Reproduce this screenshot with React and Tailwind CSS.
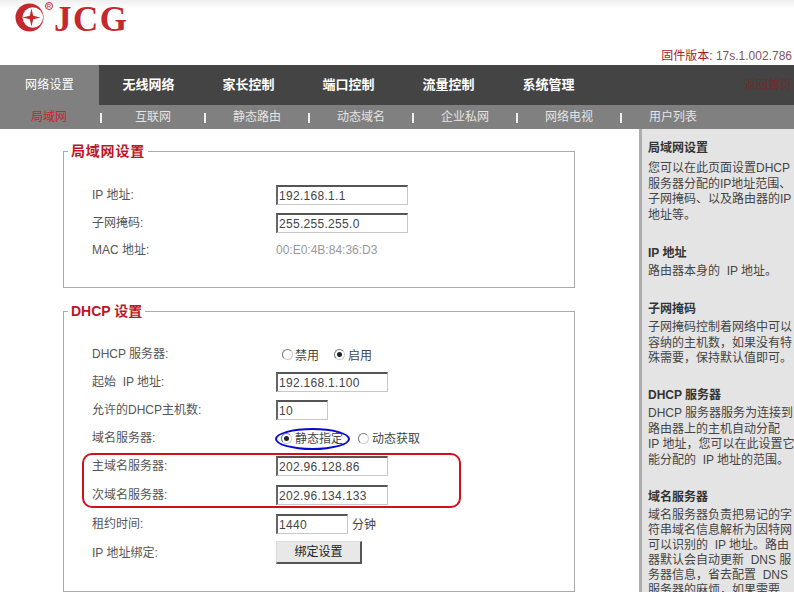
const FONT = '"Liberation Sans", "Noto Sans CJK SC", sans-serif';

const mainTabs = ['无线网络', '家长控制', '端口控制', '流量控制', '系统管理'];
const subTabs = ['互联网', '静态路由', '动态域名', '企业私网', '网络电视', '用户列表'];

const help = [
  { title: '局域网设置', cls: 'mt-0', head: 'mb-[5px]', line: 'h-[15.5px] leading-[15.5px]', lines: ['您可以在此页面设置DHCP', '服务器分配的IP地址范围、', '子网掩码、以及路由器的IP', '地址等。'] },
  { title: 'IP 地址', cls: 'mt-[22px]', head: 'mb-[3px]', line: 'h-[15.5px] leading-[15.5px]', lines: ['路由器本身的\u00a0 IP 地址。'] },
  { title: '子网掩码', cls: 'mt-[21.5px]', head: 'mb-[3px]', line: 'h-[15.5px] leading-[15.5px]', lines: ['子网掩码控制着网络中可以', '容纳的主机数，如果没有特', '殊需要，保持默认值即可。'] },
  { title: 'DHCP 服务器', cls: 'mt-[20.5px]', head: 'mb-[3px]', line: 'h-[15.5px] leading-[15.5px]', lines: ['DHCP 服务器服务为连接到', '路由器上的主机自动分配', 'IP 地址，您可以在此设置它', '能分配的\u00a0 IP 地址的范围。'] },
  { title: '域名服务器', cls: 'mt-[21px]', head: 'mb-[3px]', line: 'h-[15px] leading-[15px]', lines: ['域名服务器负责把易记的字', '符串域名信息解析为因特网', '可以识别的\u00a0 IP 地址。路由', '器默认会自动更新\u00a0 DNS 服', '务器信息，省去配置\u00a0 DNS', '服务器的麻烦，如果需要'] },
];

function Field({ value, width }) {
  return (
    <div className={`${width} h-[20px] bg-white border-t-2 border-l-2 border-r border-b border-t-[#555555] border-l-[#666666] border-r-[#c8c8c8] border-b-[#c8c8c8] pl-[1px] text-[12px] leading-[18px] tracking-[0.3px] text-[#444444]`}>
      {value}
    </div>
  );
}

function Radio({ on }) {
  return (
    <span className="w-[11px] h-[11px] rounded-full border border-t-[#777777] border-l-[#777777] border-r-[#cccccc] border-b-[#cccccc] bg-white flex items-center justify-center">
      {on && <span className="w-[5px] h-[5px] rounded-full bg-[#222222]" />}
    </span>
  );
}

function Row({ label, h, children, gray }) {
  return (
    <div className={`flex items-center ${h}`}>
      <div className="w-[184px] text-[12px] text-[#555555] whitespace-nowrap">{label}</div>
      <div className={`flex items-center ${gray ? 'text-[#999999]' : 'text-[#444444]'} text-[12px]`}>{children}</div>
    </div>
  );
}

function Logo() {
  return (
    <div className="flex items-start pl-[15px] pt-[3px]">
      <svg width="29" height="29" viewBox="0 0 29 29">
        <circle cx="14.5" cy="14.5" r="14" fill="#c5282e" />
        <circle cx="17.8" cy="14.5" r="10.2" fill="#ffffff" />
        <path fill="#c5282e" d="M16.5 5.5l1.7 7.3 7.3 1.7-7.3 1.7-1.7 7.3-1.7-7.3-7.3-1.7 7.3-1.7z" />
      </svg>
      <span className="ml-[1px] -mt-[1px] w-[8px] h-[8px] rounded-full border border-[#c5282e] text-[#c5282e] text-[6px] leading-[6px] text-center">R</span>
      <span className="ml-[1px] -mt-[1px] text-[35px] leading-[35px] font-bold tracking-[1.5px] text-[#c5282e]" style={{ fontFamily: '"Liberation Serif", serif' }}>JCG</span>
    </div>
  );
}

export default function App() {
  return (
    <div className="w-[794px] h-[592px] overflow-hidden bg-white flex flex-col" style={{ fontFamily: FONT }}>
      <header className="h-[65px] shrink-0 flex justify-between bg-[linear-gradient(to_bottom,#eeeeee,#ffffff_9px)]">
        <Logo />
        <div className="self-end pb-[1px] pr-[2px] text-[12px] leading-[16px] text-[#a31d2b] whitespace-nowrap">
          固件版本: <span className="text-[#83505a]">17s.1.002.786</span>
        </div>
      </header>

      <nav className="h-[40px] shrink-0 bg-[#444444] flex items-center">
        <div className="w-[99px] h-full bg-[#808080] flex items-center justify-center text-[12px] text-white tracking-[0.2px]">网络设置</div>
        {mainTabs.map((t) => (
          <div key={t} className="w-[100px] pr-[1px] text-center text-[13px] font-bold text-white whitespace-nowrap">{t}</div>
        ))}
        <div className="ml-auto pr-[2px] text-[12px] text-[#6e2d2d] whitespace-nowrap">返回首页</div>
      </nav>

      <nav className="h-[24px] shrink-0 bg-[#808080] flex items-center text-[12px]">
        <div className="w-[98px] text-center text-[#c8242c]">局域网</div>
        {subTabs.map((t) => (
          <div key={t} className="flex items-center">
            <div className="w-[6px] flex justify-center"><span className="w-[2px] h-[10px] mt-[2px] bg-[#eeeeee]" /></div>
            <div className="w-[98px] text-center text-[#e4e4e4] whitespace-nowrap">{t}</div>
          </div>
        ))}
      </nav>

      <div className="flex-1 flex min-h-0 relative">
        <main className="w-[639px] shrink-0 pl-[63px] pr-[64px] pt-[12px]">
          <fieldset className="h-[147px] border border-[#aaaaaa] pl-[28px] pt-[20px]">
            <legend className="-ml-[24px] px-[3px] text-[14px] leading-[20px] font-bold tracking-[0.8px] text-[#c01425]">局域网设置</legend>
            <Row label="IP 地址:" h="h-[28px]"><Field value="192.168.1.1" width="w-[132px]" /></Row>
            <Row label="子网掩码:" h="h-[28px]"><Field value="255.255.255.0" width="w-[132px]" /></Row>
            <Row label="MAC 地址:" h="h-[26px]" gray>00:E0:4B:84:36:D3</Row>
          </fieldset>

          <fieldset className="mt-[13px] h-[291px] border border-[#aaaaaa] pl-[28px] pt-[19px]">
            <legend className="-ml-[24px] px-[3px] text-[14px] leading-[20px] font-bold text-[#c01425]">DHCP 设置</legend>
            <Row label="DHCP 服务器:" h="h-[28px]">
              <span className="ml-[6px]"><Radio /></span>
              <span className="ml-[2px] mt-[3px] w-[39px]">禁用</span>
              <Radio on />
              <span className="ml-[3px] mt-[3px]">启用</span>
            </Row>
            <Row label={'起始\u00a0 IP 地址:'} h="h-[27px]"><Field value="192.168.1.100" width="w-[112px]" /></Row>
            <Row label="允许的DHCP主机数:" h="h-[29px]"><Field value="10" width="w-[52px]" /></Row>
            <Row label="域名服务器:" h="h-[28px]">
              <span className="ml-[5px]"><Radio on /></span>
              <span className="ml-[3px] mt-[2px] w-[63px] whitespace-nowrap">静态指定</span>
              <Radio />
              <span className="ml-[3px] mt-[2px] whitespace-nowrap">动态获取</span>
            </Row>
            <Row label="主域名服务器:" h="h-[28px]"><Field value="202.96.128.86" width="w-[112px]" /></Row>
            <Row label="次域名服务器:" h="h-[29px]"><Field value="202.96.134.133" width="w-[112px]" /></Row>
            <Row label="租约时间:" h="h-[29px]">
              <Field value="1440" width="w-[72px]" />
              <span className="ml-[4px] mt-[2px]">分钟</span>
            </Row>
            <Row label="IP 地址绑定:" h="h-[29px]">
              <div className="w-[86px] h-[23px] bg-[#e8e8e8] border-t border-l border-r-2 border-b-2 border-t-[#dddddd] border-l-[#dddddd] border-r-[#555555] border-b-[#555555] flex items-center justify-center text-[12px] text-[#222222]">绑定设置</div>
            </Row>
          </fieldset>
        </main>

        <aside className="flex-1 bg-[#e4e4e4] border-l-[3px] border-l-[#aeaeae] pl-[6px] pt-[11px] overflow-hidden text-[12px] text-[#444444]">
          {help.map((s, i) => (
            <section key={i} className={s.cls}>
              <h3 className={`h-[16px] leading-[16px] font-bold text-[#333333] whitespace-nowrap ${s.head}`}>{s.title}</h3>
              {s.lines.map((l) => (
                <div key={l} className={`${s.line} whitespace-nowrap`}>{l}</div>
              ))}
            </section>
          ))}
        </aside>

        <div className="absolute left-[82px] top-[324px] w-[379px] h-[55px] rounded-[10px] border-2 border-[#d0101c]" />
        <div className="absolute left-[275px] top-[299px] w-[75px] h-[22px] rounded-[50%] border-2 border-[#0a0ad0]" />
      </div>
    </div>
  );
}
